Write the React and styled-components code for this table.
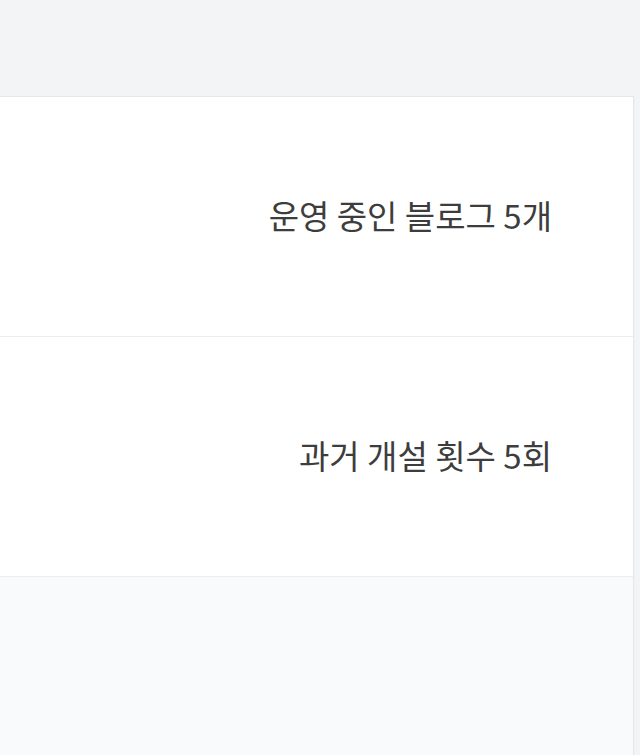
import React from 'react'
import styled, { createGlobalStyle } from 'styled-components'

const GlobalStyle = createGlobalStyle`
  html, body {
    margin: 0;
    padding: 0;
    background: #f3f4f6;
    font-family: "Noto Sans CJK KR", "Noto Sans", sans-serif;
    overflow: hidden;
  }
`

const stats = ['운영 중인 블로그 5개', '과거 개설 횟수 5회']

function App() {
  return (
    <>
      <GlobalStyle />
      <Page>
        <Card>
          {stats.map((s) => (
            <Row key={s}>
              <Label>{s}</Label>
            </Row>
          ))}
          <Footer />
        </Card>
      </Page>
    </>
  )
}

export default App

const Page = styled.div`
  padding-top: 96px;
  padding-right: 6px;
  height: 755px;
  box-sizing: border-box;
  display: flex;
  overflow: hidden;
`

const Card = styled.div`
  flex: 1;
  margin-left: -20px;
  background: #ffffff;
  border: 1px solid #e5e7eb;
  border-bottom: none;
  display: flex;
  flex-direction: column;
  box-shadow: 0 1px 2px rgba(0, 0, 0, 0.04);
`

const Row = styled.div`
  height: 240px;
  box-sizing: border-box;
  display: flex;
  align-items: center;
  justify-content: flex-end;
  padding-right: 81px;
  border-bottom: 1px solid #ebedf0;
`

const Label = styled.span`
  font-size: 33px;
  color: #3d3d3d;
  margin-top: -4px;
`

const Footer = styled.div`
  flex: 1;
  background: #f9fafb;
`
